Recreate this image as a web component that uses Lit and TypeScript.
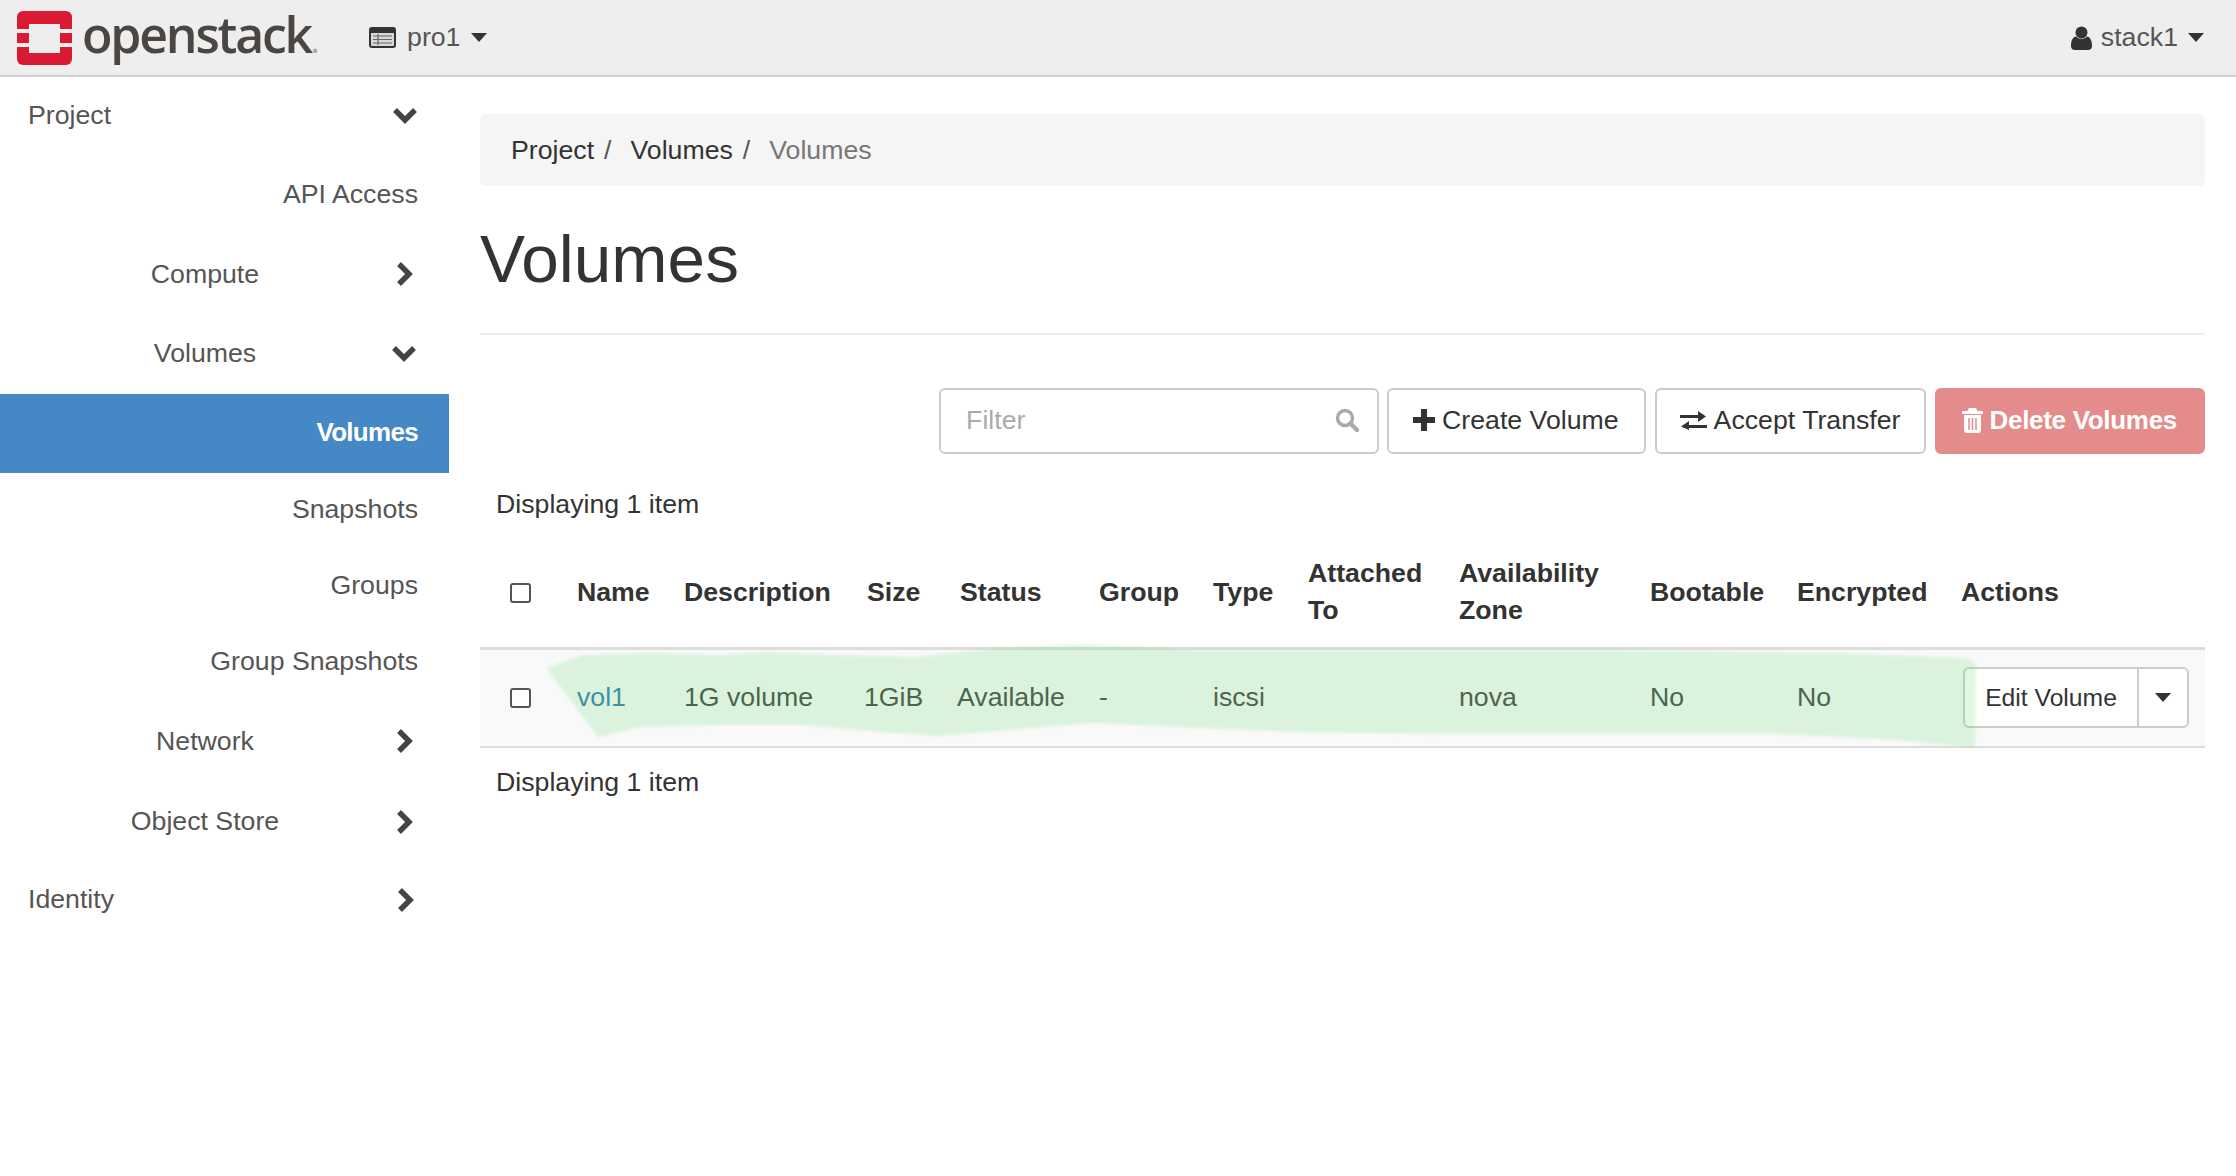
import { LitElement, html, css, svg } from 'lit';
import { customElement } from 'lit/decorators.js';

const caret = html`<svg class="caret" width="16" height="9" viewBox="0 0 16 9"><path d="M0 0h16L8 9z" /></svg>`;
const chevDown = html`<svg width="26" height="17" viewBox="0 0 26 17"><path d="M3 3l10 10L23 3" fill="none" stroke="#444" stroke-width="5.5" /></svg>`;
const chevRight = html`<svg width="26" height="24" viewBox="0 0 26 24"><path d="M8 2l10 10L8 22" fill="none" stroke="#444" stroke-width="5.5" /></svg>`;

type NavRow = { label: string; kind: 'top' | 'group' | 'leaf'; h: number; icon?: 'down' | 'right'; active?: boolean };

const NAV: NavRow[] = [
  { label: 'Project', kind: 'top', h: 78, icon: 'down' },
  { label: 'API Access', kind: 'leaf', h: 80 },
  { label: 'Compute', kind: 'group', h: 80, icon: 'right' },
  { label: 'Volumes', kind: 'group', h: 79, icon: 'down' },
  { label: 'Volumes', kind: 'leaf', h: 79, active: true },
  { label: 'Snapshots', kind: 'leaf', h: 75 },
  { label: 'Groups', kind: 'leaf', h: 76 },
  { label: 'Group Snapshots', kind: 'leaf', h: 77 },
  { label: 'Network', kind: 'group', h: 82, icon: 'right' },
  { label: 'Object Store', kind: 'group', h: 79, icon: 'right' },
  { label: 'Identity', kind: 'top', h: 77, icon: 'right' },
];

const COLS = [
  { w: 97, label: '' },
  { w: 107, label: 'Name' },
  { w: 183, label: 'Description' },
  { w: 93, label: 'Size' },
  { w: 139, label: 'Status' },
  { w: 114, label: 'Group' },
  { w: 95, label: 'Type' },
  { w: 151, label: 'Attached To' },
  { w: 191, label: 'Availability Zone' },
  { w: 147, label: 'Bootable' },
  { w: 164, label: 'Encrypted' },
  { w: 244, label: 'Actions' },
];

// the hand drawn marker stroke across the row, in page coordinates
const HIGHLIGHT =
  'M546 668 L583 655 L652 653 L721 655 L767 652 L836 655 L916 657 L997 648 L1083 644 L1140 647 L1197 650 L1598 650 L1837 653 L1966 658 L1976 663 L1975 748 L1897 740 L1778 734 L1449 734 L1300 732 L1197 728 L1094 723 L1008 730 L939 736 L882 732 L801 725 L721 725 L641 727 L598 737 Z';

@customElement('app-root')
export class AppRoot extends LitElement {
  static styles = css`
    :host {
      display: block;
      position: relative;
      min-height: 1176px;
      background: #fff;
      color: #333;
      font-family: 'Liberation Sans', Arial, sans-serif;
      font-size: 26.7px;
    }
    .navbar {
      height: 77px;
      background: #eee;
      border-bottom: 2px solid #d0d0d0;
      display: flex;
      align-items: center;
      padding: 0 32px 0 17px;
      box-sizing: border-box;
    }
    .logo-text {
      font-family: 'Open Sans', sans-serif;
      font-weight: 600;
      font-size: 50px;
      letter-spacing: -2.2px;
      color: #4b4642;
      margin-left: 10px;
      line-height: 75px;
    }
    .logo-text span {
      color: #aaa;
      font-size: 30px;
    }
    .project {
      display: flex;
      align-items: center;
      margin-left: 52px;
      color: #555;
    }
    .project .label {
      margin: 0 11px 0 11px;
    }
    .user {
      margin-left: auto;
      display: flex;
      align-items: center;
      color: #555;
    }
    .user .label {
      margin: 0 10px 0 9px;
    }
    .caret path {
      fill: #333;
    }
    .body {
      display: flex;
    }
    .sidebar {
      width: 449px;
      flex: none;
      color: #555;
    }
    .row {
      display: flex;
      align-items: center;
      box-sizing: border-box;
      padding-bottom: 2px;
    }
    .row.top {
      padding-left: 28px;
    }
    .row.top .label {
      width: 364px;
    }
    .row.group .label {
      width: 410px;
      text-align: center;
    }
    .row.leaf {
      justify-content: flex-end;
      padding-right: 31px;
    }
    .row.active {
      background: #4488c5;
      color: #fff;
      font-weight: bold;
      font-size: 26px;
      letter-spacing: -0.7px;
    }
    .row .chev {
      display: flex;
      flex: none;
    }
    .row.group .chev {
      margin-left: -19px;
    }
    .main {
      flex: 1;
      padding: 37px 31px 0 31px;
      min-width: 0;
    }
    .crumbs {
      height: 72px;
      background: #f5f5f5;
      border-radius: 6px;
      display: flex;
      align-items: center;
      padding-left: 31px;
    }
    .crumbs .sep {
      color: #555;
      margin: 0 19px 0 10px;
    }
    .crumbs .current {
      color: #777;
    }
    h1 {
      font-size: 67.5px;
      font-weight: normal;
      margin: 0;
      line-height: 72px;
      padding: 37px 0 38px;
      border-bottom: 2px solid #eee;
      color: #333;
    }
    .toolbar {
      display: flex;
      justify-content: flex-end;
      gap: 9px;
      margin-top: 53px;
    }
    .filter,
    .btn {
      height: 66px;
      box-sizing: border-box;
      border: 2px solid #ccc;
      border-radius: 6px;
      background: #fff;
      display: flex;
      align-items: center;
      color: #333;
      padding-bottom: 2px;
    }
    .filter {
      width: 440px;
      padding-left: 25px;
      padding-right: 18px;
      margin-right: -1px;
      justify-content: space-between;
      color: #aaa;
    }
    .btn {
      padding-left: 24px;
      padding-right: 25px;
      gap: 7px;
    }
    .btn.transfer {
      padding-left: 23px;
      padding-right: 23px;
    }
    .btn.danger {
      background: #e48c8c;
      border-color: #e48c8c;
      color: #fff;
      font-weight: bold;
      font-size: 26px;
      letter-spacing: -0.3px;
      padding-left: 25px;
      padding-right: 26px;
    }
    .count {
      padding-left: 16px;
      line-height: 37px;
    }
    .count.above {
      margin-top: 32px;
    }
    .count.below {
      margin-top: 16px;
    }
    table {
      border-collapse: collapse;
      table-layout: fixed;
      width: 1725px;
      margin-top: 15px;
    }
    th {
      height: 110px;
      text-align: left;
      vertical-align: middle;
      line-height: 37px;
      padding: 0 12px 0 0;
      border-bottom: 3px solid #ddd;
      box-sizing: border-box;
    }
    td {
      height: 99px;
      background: #f9f9f9;
      padding: 0;
      white-space: nowrap;
      border-bottom: 2px solid #ddd;
      color: #444;
      box-sizing: border-box;
    }
    .shift {
      margin-left: -3px;
    }
    .cb {
      display: block;
      width: 21px;
      height: 20px;
      box-sizing: border-box;
      border: 2px solid #555;
      border-radius: 3px;
      background: #fff;
      margin: 1px 0 0 30px;
    }
    a {
      color: #337ab7;
      text-decoration: none;
    }
    .split {
      display: inline-flex;
      height: 61px;
      box-sizing: border-box;
      border: 2px solid #ccc;
      border-radius: 6px;
      background: #fff;
      margin-left: 2px;
      color: #333;
    }
    .split .edit {
      width: 174px;
      box-sizing: border-box;
      display: flex;
      align-items: center;
      justify-content: center;
      border-right: 2px solid #ccc;
      font-size: 24.7px;
    }
    .split .more {
      width: 48px;
      display: flex;
      align-items: center;
      justify-content: center;
    }
    .marker {
      position: absolute;
      left: 0;
      top: 0;
      pointer-events: none;
    }
    .marker path {
      fill: rgba(110, 220, 120, 0.21);
      filter: blur(1.5px);
    }
  `;

  private renderNavRow(r: NavRow) {
    const classes = `row ${r.kind}${r.active ? ' active' : ''}`;
    return html`<div class=${classes} style="height:${r.h}px">
      <span class="label">${r.label}</span>
      ${r.icon ? html`<span class="chev">${r.icon === 'down' ? chevDown : chevRight}</span>` : ''}
    </div>`;
  }

  render() {
    return html`
      <div class="navbar">
        <svg width="55" height="54" viewBox="0 0 55 54">
          <rect width="55" height="54" rx="6" fill="#da1a32" />
          <rect x="12" y="13" width="31" height="29" fill="#eee" />
          <rect x="0" y="18" width="12" height="4" fill="#eee" />
          <rect x="0" y="32" width="12" height="4" fill="#eee" />
          <rect x="43" y="18" width="12" height="4" fill="#eee" />
          <rect x="43" y="32" width="12" height="4" fill="#eee" />
        </svg>
        <span class="logo-text">openstack<span>.</span></span>
        <div class="project">
          <svg width="27" height="21" viewBox="0 0 27 21">
            <rect x="1" y="1" width="25" height="19" rx="2" fill="#d8d8d8" stroke="#333" stroke-width="2" />
            <rect x="1" y="1" width="25" height="5" fill="#333" />
            <path d="M4 9h19M4 12.5h19M4 16h19M9 7v11" stroke="#666" stroke-width="1.2" fill="none" />
          </svg>
          <span class="label">pro1</span>${caret}
        </div>
        <div class="user">
          <svg width="21" height="24" viewBox="0 0 21 24">
            <circle cx="10.5" cy="6.5" r="6" fill="#333" />
            <path d="M0 20c0-6 2-9 5-9.500 1.500 1.500 3.500 2.300 5.500 2.300s4-.8 5.500-2.300c3 .5 5 3.500 5 9.500 0 2.500-1.500 4-4 4H4c-2.500 0-4-1.500-4-4z" fill="#333" />
          </svg>
          <span class="label">stack1</span>${caret}
        </div>
      </div>

      <div class="body">
        <nav class="sidebar">${NAV.map((r) => this.renderNavRow(r))}</nav>
        <main class="main">
          <div class="crumbs">
            <span>Project</span><span class="sep">/</span>
            <span>Volumes</span><span class="sep">/</span>
            <span class="current">Volumes</span>
          </div>
          <h1>Volumes</h1>
          <div class="toolbar">
            <div class="filter">
              <span>Filter</span>
              <svg width="24" height="24" viewBox="0 0 24 24">
                <circle cx="10" cy="10" r="7.500" fill="none" stroke="#aaa" stroke-width="3.500" />
                <path d="M15.500 15.500L22 22" stroke="#aaa" stroke-width="4.500" stroke-linecap="round" />
              </svg>
            </div>
            <div class="btn">
              <svg width="22" height="22" viewBox="0 0 22 22"><path d="M8 0h6v8h8v6h-8v8H8v-8H0V8h8z" fill="#333" /></svg>
              Create Volume
            </div>
            <div class="btn transfer">
              <svg width="27" height="20" viewBox="0 0 27 20">
                <path d="M0 5h18V1l8 5.500-8 5.500V8H0zM27 15H9v-4l-8 5.500L9 20v-2h18z" fill="#333" />
              </svg>
              Accept Transfer
            </div>
            <div class="btn danger">
              <svg width="21" height="25" viewBox="0 0 21 25">
                <path d="M7 0h7l1.500 3H21v3H0V3h5.500zM2 7h17v15c0 2-1 3-3 3H5c-2 0-3-1-3-3z" fill="#fff" />
                <path d="M7 10v12M10.500 10v12M14 10v12" stroke="#e48c8c" stroke-width="1.500" />
              </svg>
              Delete Volumes
            </div>
          </div>
          <div class="count above">Displaying 1 item</div>
          <table>
            <colgroup>${COLS.map((c) => html`<col style="width:${c.w}px" />`)}</colgroup>
            <thead>
              <tr>
                <th><span class="cb"></span></th>
                ${COLS.slice(1).map((c) => html`<th>${c.label}</th>`)}
              </tr>
            </thead>
            <tbody>
              <tr>
                <td><span class="cb"></span></td>
                <td><a href="#">vol1</a></td>
                <td>1G volume</td>
                <td><span class="shift">1GiB</span></td>
                <td><span class="shift">Available</span></td>
                <td>-</td>
                <td>iscsi</td>
                <td></td>
                <td>nova</td>
                <td>No</td>
                <td>No</td>
                <td>
                  <div class="split">
                    <span class="edit">Edit Volume</span>
                    <span class="more">${caret}</span>
                  </div>
                </td>
              </tr>
            </tbody>
          </table>
          <div class="count below">Displaying 1 item</div>
        </main>
      </div>

      <svg class="marker" width="2236" height="1176" viewBox="0 0 2236 1176">
        ${svg`<path d=${HIGHLIGHT} />`}
      </svg>
    `;
  }
}
